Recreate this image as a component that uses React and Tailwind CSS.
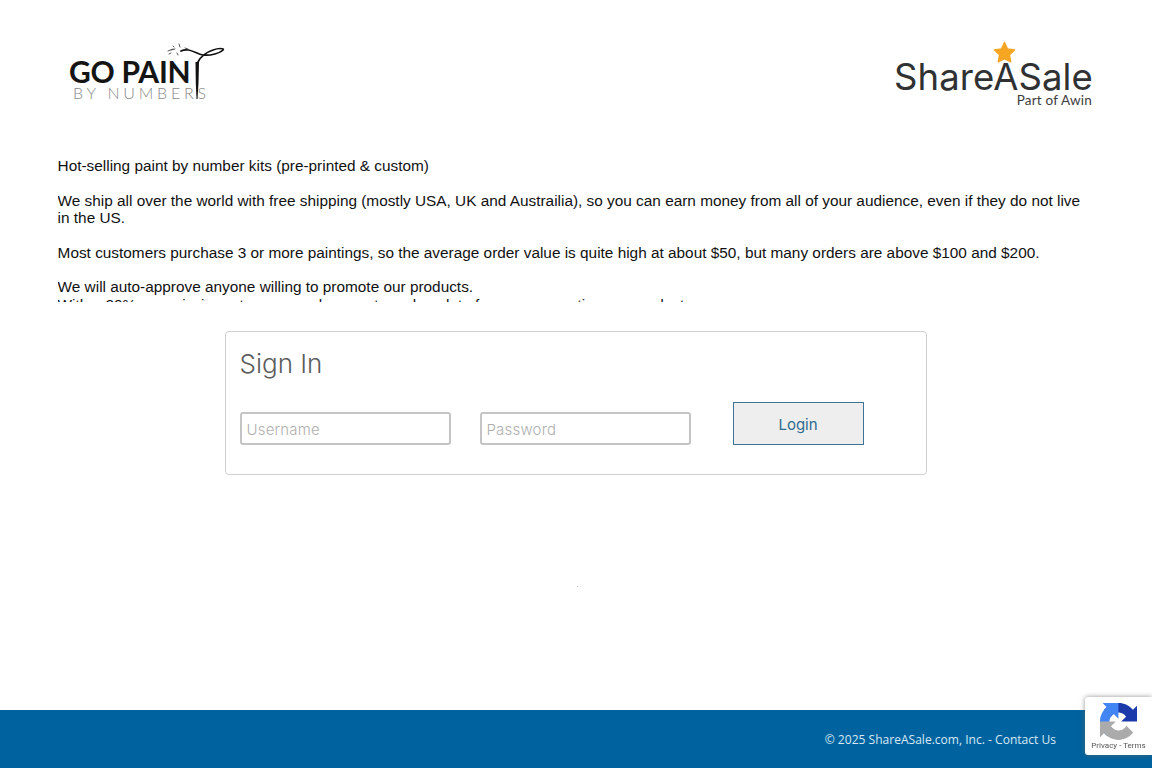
const GoPaintLogo = () => (
  <div className="relative w-[160px] h-[66px]">
    <p className="font-['Lato',sans-serif] font-bold text-[30px] leading-[30px] tracking-[-0.25px] text-[#141414] pt-[15px]">GO PAIN</p>
    <p className="font-['Lato',sans-serif] font-light text-[16px] leading-[14px] tracking-[3.8px] text-[#8a8a8a] pl-[4px] whitespace-nowrap">BY NUMBERS</p>
    {/* brush over the letters */}
    <svg className="absolute left-[90px] top-0 w-[70px] h-[66px]" viewBox="0 0 70 66" fill="none">
      <path d="M22 10C30 6 37 13 44 14C52 15 61 12 64 9C66 7 59 7 54 9C48 11 42 15 39 21" stroke="#111" strokeWidth="1.700" strokeLinecap="round" />
      <path d="M9 10l5-2M14 5l1 1M10 13l2-1M20 3l1 3M12 9l4-1M26 7l3 1M18 12l1 2" stroke="#555" strokeWidth="1" strokeLinecap="round" />
      <path d="M36.500 21L40 21L39.500 42L38.500 58L37.500 58L36.800 42Z" fill="#111" />
    </svg>
  </div>
);

const ShareASaleLogo = () => (
  <div className="relative w-[198px] h-[66px] text-right">
    <svg className="absolute left-[99px] top-0 w-[23px] h-[23px]" viewBox="0 0 24 24">
      <path d="M12 1.500l3.200 6.800 7.300 1-5.300 5.100 1.300 7.400L12 18.300l-6.500 3.500 1.300-7.400L1.500 9.300l7.300-1z" fill="#f6a623" stroke="#f6a623" strokeWidth="1.500" strokeLinejoin="round" />
    </svg>
    <p className="font-['Inter',sans-serif] font-normal text-[36.500px] leading-[32px] tracking-[0.1px] text-[#2f3133] pt-[20px] whitespace-nowrap">ShareASale</p>
    <p className="font-['Lato',sans-serif] text-[13.500px] leading-[14px] text-[#3c3c3c] tracking-[0.2px]">Part of Awin</p>
  </div>
);

const RecaptchaBadge = () => (
  <div className="fixed right-0 bottom-[13px] w-[67px] h-[58px] bg-white rounded-l-[3px] shadow-[0_0_5px_rgba(100,100,100,0.7)] flex flex-col items-center pt-[6px]">
    <svg className="w-[37px] h-[37px]" viewBox="0 0 64 64">
      <path d="M64 31.955l-.033-1.37V4.687l-7.160 7.160C50.948 4.674 42.033.093 32.050.093c-10.400 0-19.622 4.960-25.458 12.640l11.736 11.860a15.550 15.550 0 0 1 4.754-5.334c2.050-1.600 4.952-2.906 8.968-2.906.485 0 .860.057 1.135.163 4.976.393 9.288 3.140 11.828 7.124l-8.307 8.307L64 31.953" fill="#1c3aa9" />
      <path d="M31.862 0l-1.370.033H4.594l7.160 7.160C4.580 13.050 0 21.967 0 31.950c0 10.400 4.960 19.622 12.640 25.458l11.860-11.736a15.550 15.550 0 0 1-5.334-4.754c-1.600-2.050-2.906-4.952-2.906-8.968 0-.485.057-.860.163-1.135.393-4.976 3.140-9.288 7.124-11.828l8.307 8.307L31.860 0" fill="#4285f4" />
      <path d="M.001 31.955l.033 1.370v25.900l7.160-7.160c5.860 7.173 14.775 11.754 24.760 11.754 10.390 0 19.612-4.960 25.448-12.640l-11.736-11.860a15.550 15.550 0 0 1-4.754 5.334c-2.050 1.600-4.952 2.906-8.968 2.906-.485 0-.860-.057-1.135-.163-4.976-.393-9.288-3.140-11.828-7.124l8.307-8.307C17.287 31.965 5.600 31.955.001 31.955" fill="#ababab" />
    </svg>
    <p className="font-['Roboto',sans-serif] text-[8px] leading-[12px] text-[#555] whitespace-nowrap">Privacy - Terms</p>
  </div>
);

export default function App() {
  return (
    <div className="min-h-[768px] flex flex-col bg-white font-['Liberation_Sans',sans-serif]">
      <header className="flex justify-between items-start pl-[69px] pr-[60px] pt-[41px]">
        <GoPaintLogo />
        <ShareASaleLogo />
      </header>

      {/* description is cut off by its fixed height */}
      <section className="mx-[57.600px] mt-[50px] h-[145px] overflow-hidden text-[15.360px] leading-[17.330px] text-[#111]">
        <p>Hot-selling paint by number kits (pre-printed &amp; custom)</p>
        <p className="mt-[17.330px]">We ship all over the world with free shipping (mostly USA, UK and Austrailia), so you can earn money from all of your audience, even if they do not live in the US.</p>
        <p className="mt-[17.330px]">Most customers purchase 3 or more paintings, so the average order value is quite high at about $50, but many orders are above $100 and $200.</p>
        <p className="mt-[17.330px]">We will auto-approve anyone willing to promote our products.</p>
        <p>With a 20% commission rate, you can be sure to make a lot of money promoting our products.</p>
      </section>

      <section className="w-[702px] h-[144px] ml-[224.500px] mt-[29px] border border-[#cfcfcf] rounded-[4px] px-[14px] pt-[13px]">
        <h2 className="font-['Inter',sans-serif] font-light text-[26px] leading-[38px] text-[#5c5c5c]">Sign In</h2>
        <div className="flex items-end mt-[19px]">
          <input placeholder="Username" className="w-[211px] h-[33px] pt-[1px] border-2 border-[#c4c4c4] rounded-[3px] px-[5px] font-['Inter',sans-serif] font-light text-[15px] tracking-[0.2px] placeholder:text-[#b0b0b0] outline-none" />
          <input placeholder="Password" className="w-[211px] h-[33px] pt-[1px] ml-[29px] border-2 border-[#c4c4c4] rounded-[3px] px-[5px] font-['Inter',sans-serif] font-light text-[15px] tracking-[0.2px] placeholder:text-[#b0b0b0] outline-none" />
          <button className="w-[131px] h-[43px] ml-[42px] pt-[4px] bg-[#eeeeee] border border-[#3f7396] font-['Inter',sans-serif] text-[15px] text-[#2f6a8f]">Login</button>
        </div>
      </section>

      <div className="w-[1px] h-[1px] bg-[#bbbbbb] ml-[577px] mt-[111px]" />

      <footer className="mt-auto h-[58px] pt-[2px] bg-[#00639f] flex items-center justify-end pr-[96px]">
        <p className="font-['Open_Sans',sans-serif] text-[12.050px] text-[#d5e8f5]">© 2025 ShareASale.com, Inc. - Contact Us</p>
      </footer>

      <RecaptchaBadge />
    </div>
  );
}
